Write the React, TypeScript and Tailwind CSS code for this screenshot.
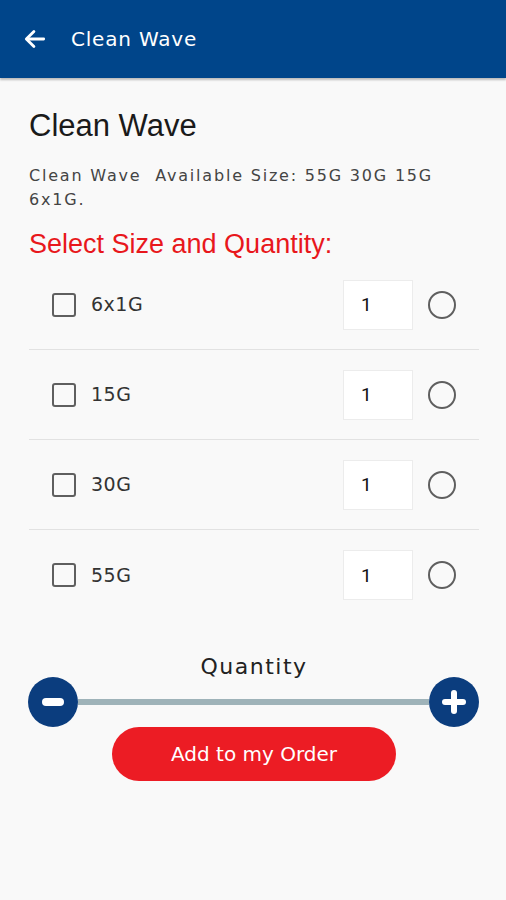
import React, { useState } from "react";

const sizes = ["6x1G", "15G", "30G", "55G"];

const App: React.FC = () => {
    const [checked, setChecked] = useState<Record<string, boolean>>({});
    const [qty, setQty] = useState<Record<string, string>>({ "6x1G": "1", "15G": "1", "30G": "1", "55G": "1" });

    return (
        <div className="w-[506px] h-[900px] bg-[#f9f9f9] font-['DejaVu_Sans',sans-serif] overflow-hidden">
            {/* Header */}
            <div className="h-[78px] bg-[#00458a] flex items-center pl-[22px] shadow-[0_2px_2px_rgba(0,0,0,0.25)]">
                <svg width="26" height="26" viewBox="0 0 24 24" fill="none" stroke="white" strokeWidth="2.6" strokeLinecap="round" strokeLinejoin="round">
                    <path d="M20 12H5" />
                    <path d="M11 5l-7 7 7 7" />
                </svg>
                <span className="ml-[23px] text-white text-[20px] tracking-[0.8px]">Clean Wave</span>
            </div>

            <div className="pl-[29px] pr-[27px]">
                <h1 className="mt-[30px] text-[31px] leading-[36px] text-[#1a1a1a] font-['Liberation_Sans',sans-serif]">Clean Wave</h1>
                <p className="mt-[20px] text-[16px] leading-[24px] text-[#444] tracking-[1.8px] max-w-[440px]">
                    Clean Wave&nbsp; Available Size: 55G 30G 15G 6x1G.
                </p>
                <h2 className="mt-[16px] text-[27px] leading-[32px] text-[#e8171c] font-['Liberation_Sans',sans-serif]">Select Size and Quantity:</h2>

                {/* Size rows */}
                <div>
                    {sizes.map((s, i) => (
                        <div
                            key={s}
                            className={`h-[90px] flex items-center ${i < sizes.length - 1 ? "border-b border-[#e2e2e2]" : ""}`}
                        >
                            <button
                                type="button"
                                onClick={() => setChecked(p => ({ ...p, [s]: !p[s] }))}
                                className="ml-[23px] w-[24px] h-[24px] border-2 border-[#5f5f5f] rounded-[3px] flex items-center justify-center"
                            >
                                {checked[s] && <span className="w-[12px] h-[12px] bg-[#5f5f5f]" />}
                            </button>
                            <span className="ml-[15px] text-[19px] text-[#333] tracking-[0.5px]">{s}</span>
                            <input
                                value={qty[s]}
                                onChange={e => setQty(p => ({ ...p, [s]: e.target.value }))}
                                className="ml-auto w-[70px] h-[50px] bg-white border border-[#ececec] pl-[17px] text-[19px] text-[#111] font-['Roboto',sans-serif] outline-none"
                            />
                            <span className="ml-[15px] mr-[23px] w-[28px] h-[28px] rounded-full border-2 border-[#5f5f5f]" />
                        </div>
                    ))}
                </div>

                {/* Quantity slider */}
                <div className="mt-[37px] text-center text-[22px] leading-[20px] text-[#222] tracking-[1.5px]">Quantity</div>
                <div className="flex items-center">
                    <button type="button" className="w-[50px] h-[50px] rounded-full bg-[#0b3d7e] flex items-center justify-center shrink-0 -ml-px">
                        <span className="w-[22px] h-[8px] bg-white rounded-full" />
                    </button>
                    <div className="flex-1 h-[6px] bg-[#9fb3b9]" />
                    <button type="button" className="w-[50px] h-[50px] rounded-full bg-[#0b3d7e] flex items-center justify-center shrink-0 relative">
                        <span className="absolute w-[24px] h-[6px] bg-white rounded-full" />
                        <span className="absolute w-[6px] h-[24px] bg-white rounded-full" />
                    </button>
                </div>

                <div className="flex justify-center">
                    <button type="button" className="w-[284px] h-[54px] rounded-full bg-[#ec1c24] text-white text-[20px]">
                        Add to my Order
                    </button>
                </div>
            </div>
        </div>
    );
};

export default App;
